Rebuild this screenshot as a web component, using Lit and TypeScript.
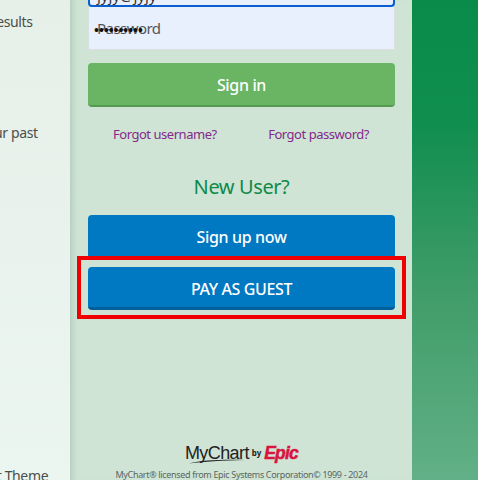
import { LitElement, html, css } from "lit";
import { customElement } from "lit/decorators.js";

@customElement("app-root")
export class AppRoot extends LitElement {
  static styles = css`
    :host { display: block; width: 478px; height: 480px; overflow: hidden; font-family: "Noto Sans", "Open Sans", sans-serif; }
    .page { display: grid; grid-template-columns: 70px 342px 66px; height: 480px; overflow: hidden; }
    .side { background: linear-gradient(180deg, #e6efe8 0%, #ecf6f1 100%); overflow: hidden; display: flex; flex-direction: column; color: #4a4f4d; font-size: 14px; letter-spacing: -0.35px; line-height: 20px; white-space: nowrap; }
    .side div { flex: none; }
    .l1 { margin: 12px 0 0 -9px; }
    .l2 { margin: 91px 0 0 -21px; }
    .l3 { margin: 323px 0 0 -52px; }
    .main { background: #cfe4d5; box-shadow: inset 7px 0 6px -5px rgba(90,120,100,.25); display: flex; flex-direction: column; padding: 0 17px 0 18px; height: 480px; box-sizing: border-box; }
    .input { flex: none; box-sizing: border-box; background: #e8f0fe; color: #555; }
    .focus { height: 8px; margin-top: -1px; border: 2px solid #0a5fd0; border-top: 0; border-radius: 0 0 4px 4px; position: relative; overflow: hidden; }
    .focus span { position: absolute; left: 7px; top: -13px; font-size: 15px; color: #333; line-height: 18px; }
    .pw { height: 43px; display: flex; align-items: center; padding-left: 8px; font-size: 15px; letter-spacing: -0.55px; border-right: 1px solid #dcdfe2; border-bottom: 1px solid #dcdfe2; border-left: 1px solid #dcdfe2; position: relative; }
    .dots { position: absolute; left: 5px; top: 16px; color: #111; font-size: 13px; letter-spacing: 0; line-height: 14px; font-weight: 700; }
    .btn { flex: none; box-sizing: border-box; height: 44px; border-radius: 4px; display: flex; align-items: center; justify-content: center; color: #fff; font-size: 16px; font-weight: 500; letter-spacing: -0.35px; }
    .signin { margin-top: 13px; padding-top: 2px; background: #69b563; border-bottom: 2px solid #559a50; }
    .links { flex: none; display: flex; justify-content: space-between; padding: 0 26px 0 25px; margin-top: 18px; color: #84298a; font-size: 13px; letter-spacing: -0.47px; line-height: 18px; }
    .new { flex: none; margin-top: 30px; text-align: center; color: #0d8a48; font-size: 20px; letter-spacing: -0.4px; line-height: 28px; }
    .signup { margin-top: 14px; background: #0079c2; height: 44px; }
    .guest { margin-top: 8px; padding-top: 3px; background: #0079c2; border-bottom: 3px solid #005f9c; height: 43px; position: relative; font-size: 16px; font-weight: 500; letter-spacing: -0.36px; }
    .guest::after { content: ""; position: absolute; inset: -11px -11px -12px -11px; border: 4px solid #f00000; }
    .foot { flex: none; margin-top: auto; margin-bottom: -1px; display: flex; flex-direction: column; align-items: center; }
    .logo { display: flex; align-items: baseline; height: 20px; position: relative; color: #222; }
    .my { font-family: "Liberation Sans", sans-serif; font-size: 18px; letter-spacing: -0.6px; line-height: 20px; }
    .by { align-self: center; font-size: 8px; font-weight: 700; margin: 0 3px 0 3px; line-height: 10px; }
    .epic { font-family: "Liberation Sans", sans-serif; font-style: italic; font-weight: 700; font-size: 17.5px; letter-spacing: -0.8px; color: #d8143f; line-height: 20px; -webkit-text-stroke: 0.5px #d8143f; }
    .swoosh { position: absolute; left: 3px; top: 14px; width: 58px; height: 8px; }
    .copy { margin-top: 5px; font-size: 9px; letter-spacing: -0.33px; line-height: 13px; color: #5a6660; white-space: nowrap; }
    .right { background: linear-gradient(180deg, #0b8b49 0%, #0f8e4e 25%, #3f9c68 60%, #62b087 100%); }
  `;
  render() {
    return html`<div class="page">
      <div class="side">
        <div class="l1">results</div>
        <div class="l2">your past</div>
        <div class="l3">Contrast Theme</div>
      </div>
      <div class="main">
        <div class="input focus"><span>jyjy@jyjy</span></div>
        <div class="input pw">Password<span class="dots">••••••••••</span></div>
        <div class="btn signin">Sign in</div>
        <div class="links"><span>Forgot username?</span><span>Forgot password?</span></div>
        <div class="new">New User?</div>
        <div class="btn signup">Sign up now</div>
        <div class="btn guest">PAY AS GUEST</div>
        <div class="foot">
          <div class="logo">
            <span class="my">MyChart</span><span class="by">by</span><span class="epic">Epic</span>
            <svg class="swoosh" viewBox="0 0 58 8"><path d="M1 6.5 C 14 3, 34 2.5, 57 3 C 34 3.6, 16 4.6, 1 6.5 Z" fill="#222"/></svg>
          </div>
          <div class="copy">MyChart® licensed from Epic Systems Corporation© 1999 - 2024</div>
        </div>
      </div>
      <div class="right"></div>
    </div>`;
  }
}
